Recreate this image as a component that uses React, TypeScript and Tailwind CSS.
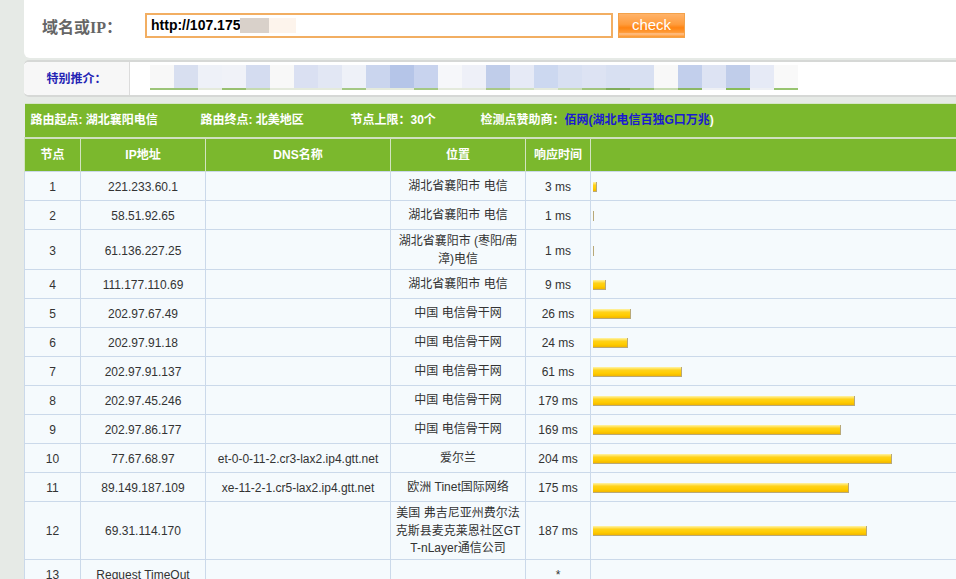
import React from "react";

interface Hop {
  no: string;
  ip: string;
  dns: string;
  loc: string;
  ms: number | null;
}

const hops: Hop[] = [
  { no: "1", ip: "221.233.60.1", dns: "", loc: "湖北省襄阳市 电信", ms: 3 },
  { no: "2", ip: "58.51.92.65", dns: "", loc: "湖北省襄阳市 电信", ms: 1 },
  { no: "3", ip: "61.136.227.25", dns: "", loc: "湖北省襄阳市 (枣阳/南漳)电信", ms: 1 },
  { no: "4", ip: "111.177.110.69", dns: "", loc: "湖北省襄阳市 电信", ms: 9 },
  { no: "5", ip: "202.97.67.49", dns: "", loc: "中国 电信骨干网", ms: 26 },
  { no: "6", ip: "202.97.91.18", dns: "", loc: "中国 电信骨干网", ms: 24 },
  { no: "7", ip: "202.97.91.137", dns: "", loc: "中国 电信骨干网", ms: 61 },
  { no: "8", ip: "202.97.45.246", dns: "", loc: "中国 电信骨干网", ms: 179 },
  { no: "9", ip: "202.97.86.177", dns: "", loc: "中国 电信骨干网", ms: 169 },
  { no: "10", ip: "77.67.68.97", dns: "et-0-0-11-2.cr3-lax2.ip4.gtt.net", loc: "爱尔兰", ms: 204 },
  { no: "11", ip: "89.149.187.109", dns: "xe-11-2-1.cr5-lax2.ip4.gtt.net", loc: "欧洲 Tinet国际网络", ms: 175 },
  { no: "12", ip: "69.31.114.170", dns: "", loc: "美国 弗吉尼亚州费尔法克斯县麦克莱恩社区GTT-nLayer通信公司", ms: 187 },
  { no: "13", ip: "Request TimeOut", dns: "", loc: "", ms: null },
];

// mosaic blocks of the blurred ad strip: [fill, underline]
const mosaic: [string, string][] = [
  ["#f8f8f8", "#9cc478"],
  ["#d8dff0", "#9cc478"],
  ["#eef1f8", "#e4eadc"],
  ["#f0f2f8", "#98c070"],
  ["#d4dcf0", "#c4dab0"],
  ["#f8f8f8", "#e4eadc"],
  ["#dae0f2", "#e4eadc"],
  ["#e2e7f4", "#e4eadc"],
  ["#eef1f8", "#a4c884"],
  ["#cad5ee", "#e4eadc"],
  ["#b5c5e8", "#e4eadc"],
  ["#c8d3ee", "#a4c884"],
  ["#f6f7fa", "#e4eadc"],
  ["#eef0f8", "#e4eadc"],
  ["#c0cdea", "#a8c888"],
  ["#e6eaf6", "#d0e0c0"],
  ["#ccd8f0", "#e4eadc"],
  ["#d8e0f2", "#c8dcb4"],
  ["#dde3f3", "#a0c47c"],
  ["#d8e0f2", "#80ac5c"],
  ["#d8e0f2", "#9cc478"],
  ["#f8f8f8", "#c8dcb4"],
  ["#c2cfec", "#8cb866"],
  ["#dde3f3", "#eef0f4"],
  ["#c0cdea", "#88bc58"],
  ["#e6eaf6", "#eef0f4"],
  ["#f9f9f9", "#98c470"],
];

const font = "font-['Liberation_Sans','Noto_Sans_CJK_SC',sans-serif]";

function Bar({ ms }: { ms: number }) {
  const w = Math.max(1, Math.round(ms * 1.465));
  return (
    <div
      className="h-[10px] border-r border-b border-[#b8a878] bg-[linear-gradient(to_bottom,#fff4a8_0%,#ffd21a_35%,#ffcc00_70%,#f2b600_100%)]"
      style={{ width: w }}
    />
  );
}

export default function App() {
  return (
    <div className={`w-[956px] h-[579px] overflow-hidden bg-[#e6eae6] pl-[24px] ${font}`}>
      {/* query box */}
      <div className="w-[1000px] h-[58px] bg-white rounded-bl-[6px] flex items-center">
        <div className="w-[121px] pl-[18px] pb-[2px] text-[16px] font-bold text-[#666] font-['Liberation_Serif','Noto_Sans_CJK_SC',serif]">
          域名或IP：
        </div>
        <div className="w-[468px] h-[25px] border-2 border-[#f2ae62] flex items-center pl-[4px] mb-[8px]">
          <span className="text-[14px] font-bold text-black">http://107.175</span>
          <span className="w-[29px] h-[15px] bg-[#d9d1ca]" />
          <span className="w-[27px] h-[15px] bg-[#fdf4ec]" />
        </div>
        <button className="ml-[5px] mb-[8px] w-[67px] h-[25px] border border-[#f3a24a] text-white text-[15px] leading-[20px] bg-[linear-gradient(to_bottom,#ffb36a_0%,#ff9c3c_45%,#ff8412_60%,#ff9a36_80%,#ffc089_86%,#ff9628_100%)]">
          check
        </button>
      </div>

      {/* recommend strip */}
      <div className="mt-[2px] w-[1000px] h-[37px] bg-white border-t-2 border-b-2 border-[#d6d8d6] rounded-l-[5px] flex">
        <div className="w-[106px] bg-[#f7f7f7] border-r border-[#dcdcdc] rounded-l-[5px] flex items-center justify-center text-[12px] font-bold text-[#2323b4]">
          特别推介：
        </div>
        <div className="ml-[20px] pt-[3px] flex">
          {mosaic.map(([c, u], i) => (
            <div key={i} className="w-[24px] flex flex-col">
              <div className="h-[23px]" style={{ background: c }} />
              <div className="h-[2px]" style={{ background: u }} />
            </div>
          ))}
        </div>
      </div>

      {/* trace table */}
      <table className="mt-[6px] table-fixed border-collapse w-[1040px] text-[12px] text-[#333]">
        <colgroup>
          <col className="w-[56px]" />
          <col className="w-[125px]" />
          <col className="w-[185px]" />
          <col className="w-[135px]" />
          <col className="w-[65px]" />
          <col />
        </colgroup>
        <thead>
          <tr className="h-[34px]">
            <td
              colSpan={6}
              className="bg-[#7bb82d] border-t border-[#d6e6c8] border-b-2 border-b-[#cfe0bf] pl-[6px] text-left font-bold text-white whitespace-nowrap"
            >
              <span className="inline-block w-[170px]">路由起点: 湖北襄阳电信</span>
              <span className="inline-block w-[150px]">路由终点: 北美地区</span>
              <span className="inline-block w-[130px]">节点上限：30个</span>
              <span>检测点赞助商：</span>
              <span className="text-[#1a1ad0]">佰网(</span>
              <span className="text-[#1a1ad0]">湖北电信百独G口万兆</span>
              <span>)</span>
            </td>
          </tr>
          <tr className="h-[34px] bg-[#7bb82d] text-white font-bold">
            <th className="border-x border-[#d2e4bf]">节点</th>
            <th className="border-x border-[#d2e4bf]">IP地址</th>
            <th className="border-x border-[#d2e4bf]">DNS名称</th>
            <th className="border-x border-[#d2e4bf]">位置</th>
            <th className="border-x border-[#d2e4bf]">响应时间</th>
            <th className="border-x border-[#d2e4bf]" />
          </tr>
        </thead>
        <tbody>
          {hops.map((h) => (
            <tr key={h.no} className="h-[29px] bg-[#f5fafd]">
              <td className="border border-[#cbd9ea] text-center pt-[2px]">{h.no}</td>
              <td className="border border-[#cbd9ea] text-center whitespace-nowrap pt-[2px]">{h.ip}</td>
              <td className="border border-[#cbd9ea] text-center whitespace-nowrap pt-[2px]">{h.dns}</td>
              <td className="border border-[#cbd9ea] text-center px-[4px] pt-[3px] pb-[1px] leading-[17.5px] break-all">
                {h.loc}
              </td>
              <td className="border border-[#cbd9ea] text-center pt-[2px]">
                {h.ms === null ? "*" : `${h.ms} ms`}
              </td>
              <td className="border border-[#cbd9ea] pl-[2px] pt-[2px]">
                {h.ms !== null && <Bar ms={h.ms} />}
              </td>
            </tr>
          ))}
        </tbody>
      </table>
    </div>
  );
}
